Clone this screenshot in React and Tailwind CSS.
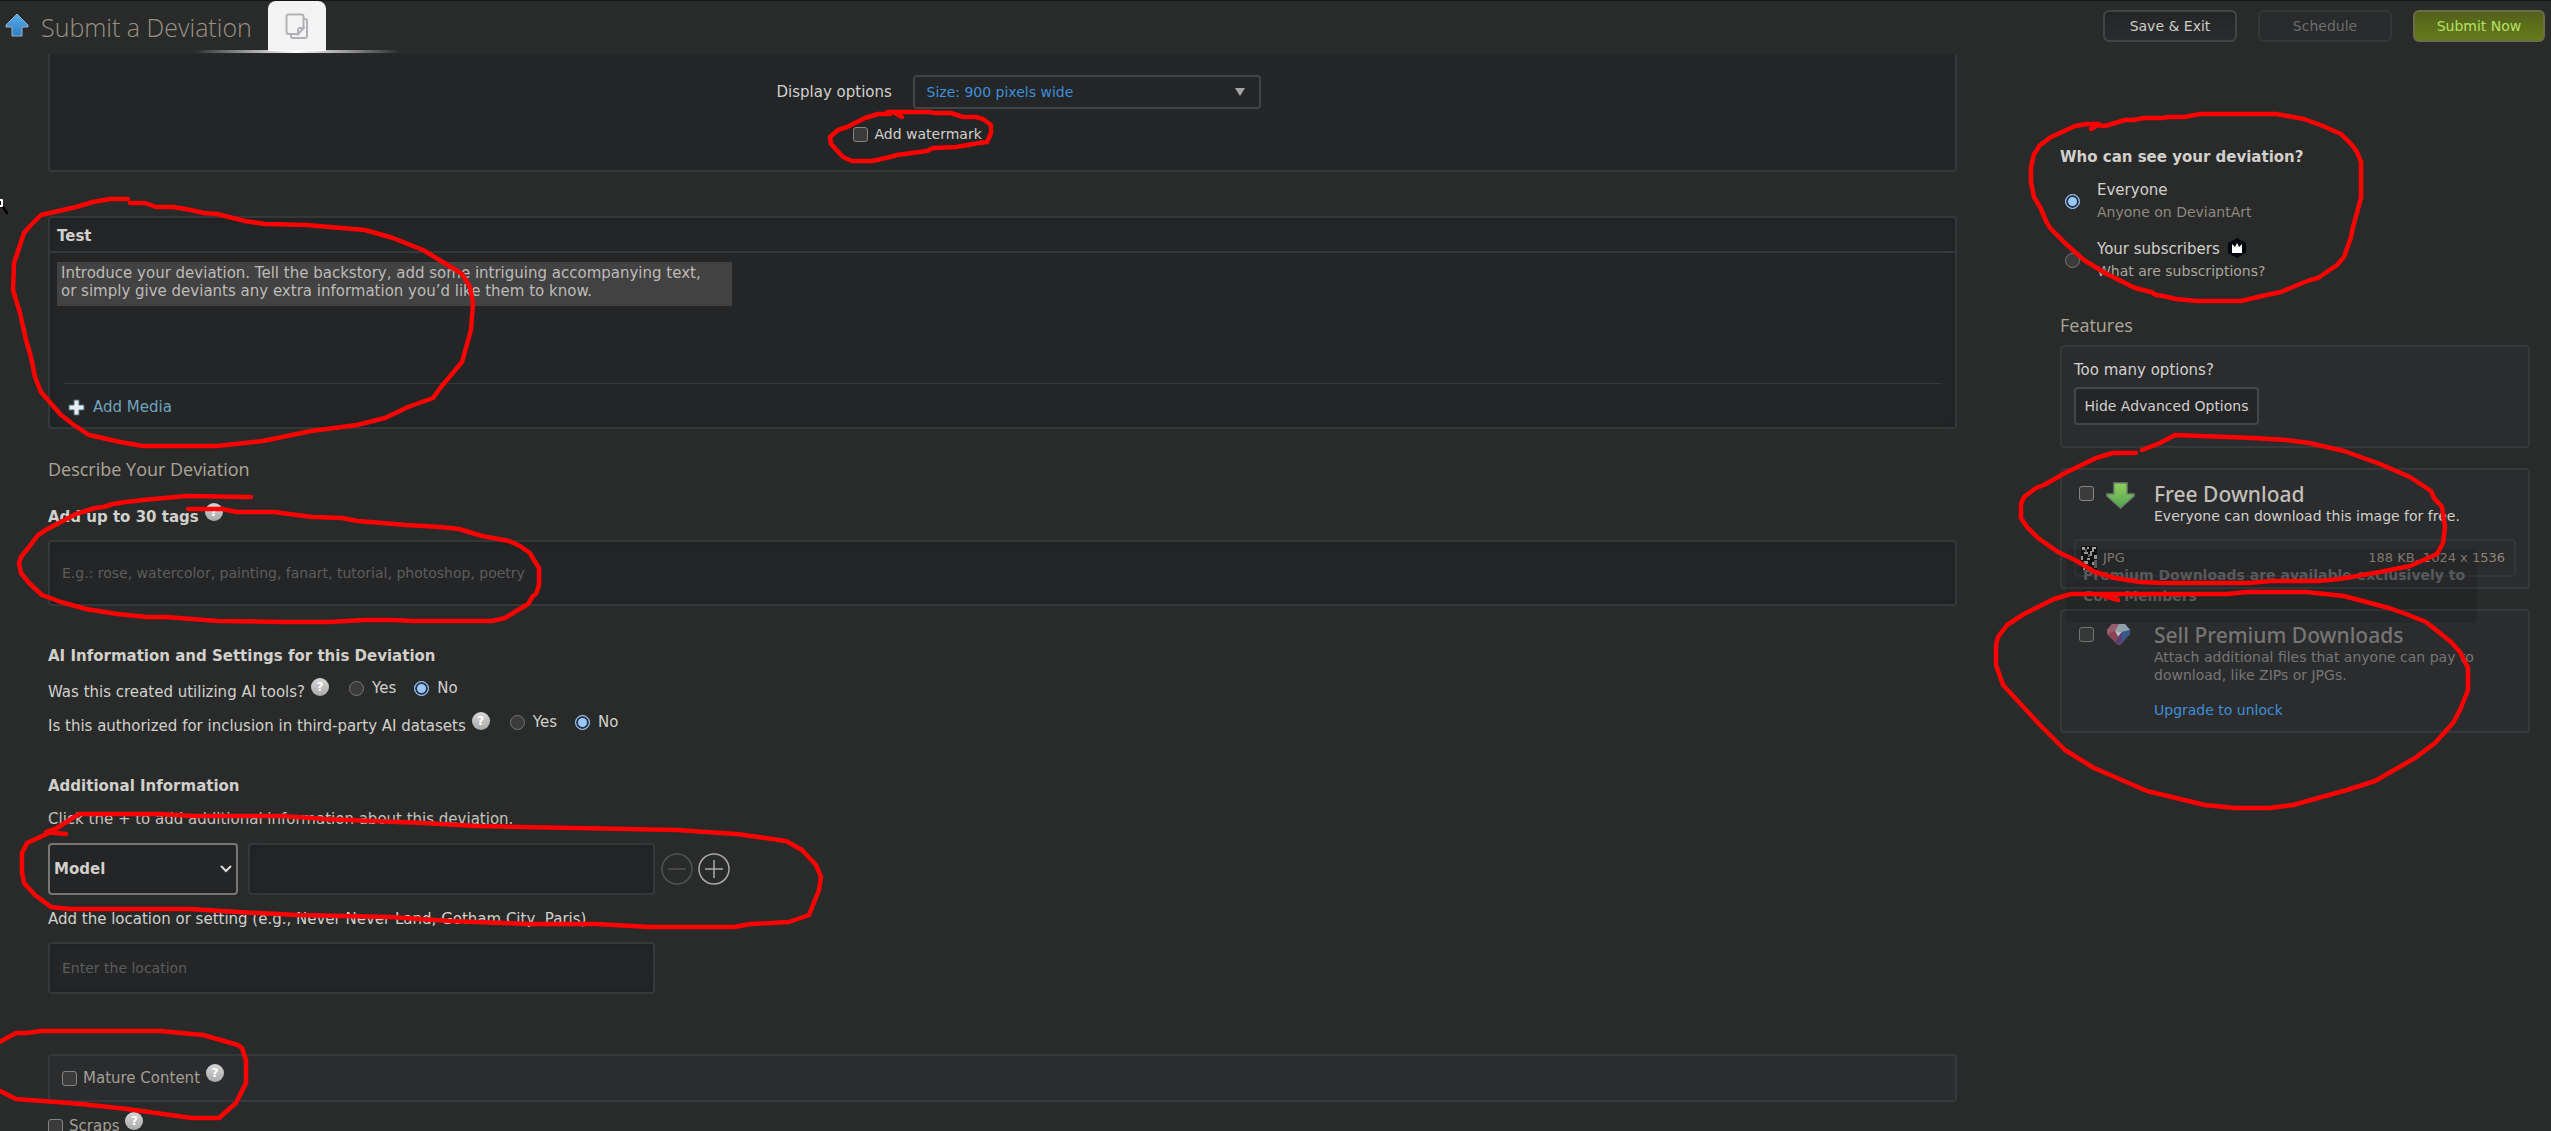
import { useState } from 'react';

const editorHint =
  'Introduce your deviation. Tell the backstory, add some intriguing accompanying text,\nor simply give deviants any extra information you’d like them to know.';

// Freehand pen strokes drawn on top of the form
const strokes = [
  '902,117 893,112 887,112 929,112 935,113 951,113 963,117 976,117 983,119 991,125 991,133 987,142 979,143 956,147 933,148 927,151 897,155 890,157 872,161 852,161 843,157 831,144 830,137 838,130 847,127 865,118 878,114 890,114',
  '2091,129 2099,124 2087,124 2075,126 2060,133 2051,137 2039,146 2037,150 2034,154 2031,168 2031,183 2034,197 2040,207 2047,223 2051,229 2066,244 2084,260 2105,273 2125,283 2135,288 2151,292 2156,295 2163,296 2176,299 2197,301 2241,301 2262,296 2281,292 2300,284 2310,280 2318,278 2337,265 2344,257 2351,237 2353,227 2361,198 2361,162 2357,152 2352,145 2341,134 2323,126 2304,119 2276,114 2200,114 2184,117 2169,117 2162,118 2144,118 2133,120 2125,120 2105,126 2096,125',
  '128,199 110,199 93,202 76,207 41,215 31,225 24,233 14,263 13,290 20,313 26,340 31,357 35,377 41,392 61,415 74,425 89,435 98,437 120,442 143,446 217,446 263,441 311,431 357,425 385,418 408,407 433,398 441,387 462,362 471,330 473,303 470,287 462,274 451,267 423,250 393,238 365,230 306,225 265,224 245,221 217,214 204,213 186,209 173,207 156,207 145,203 130,203',
  '251,497 186,496 143,500 126,502 113,504 103,507 95,508 76,514 57,524 46,530 38,535 29,547 21,557 19,563 21,573 29,583 42,595 61,602 86,609 117,614 147,617 166,617 218,621 283,622 329,622 364,620 394,620 413,621 492,621 505,618 528,604 533,596 536,594 539,585 539,568 532,557 530,553 520,546 509,541 482,536 459,529 440,527 406,525 358,521 342,518 312,517 274,512 237,512 222,509 188,509',
  '66,834 46,832 57,828 79,814 157,814 195,816 282,816 325,819 423,823 477,826 575,828 677,830 737,834 786,841 802,850 816,865 821,877 819,890 809,915 789,922 751,924 734,927 650,927 596,924 531,924 450,921 390,917 298,915 238,912 190,909 70,909 51,907 35,895 24,883 22,872 22,853 27,843 49,833',
  '-4,1044 16,1033 27,1033 41,1031 160,1031 203,1035 238,1045 242,1048 246,1060 246,1083 236,1103 219,1118 192,1118 127,1109 81,1104 43,1101 16,1099 -4,1089',
  '2136,453 2113,453 2096,458 2065,473 2044,485 2036,488 2024,497 2021,504 2021,518 2027,527 2038,538 2058,552 2075,560 2095,572 2115,578 2140,582 2162,583 2249,583 2271,581 2319,581 2339,579 2380,572 2410,566 2437,554 2443,543 2445,527 2442,507 2434,498 2431,491 2410,477 2380,464 2344,451 2309,443 2286,440 2253,438 2175,435 2160,443 2142,450',
  '2118,600 2098,594 2071,594 2054,599 2024,614 2007,625 1998,637 1996,645 1996,665 2003,685 2040,725 2065,750 2094,768 2147,791 2205,805 2235,808 2269,808 2293,805 2347,790 2375,781 2415,758 2435,743 2453,723 2460,710 2468,690 2468,668 2460,652 2451,642 2426,622 2406,614 2389,608 2344,596 2306,592 2247,592 2227,594 2098,594',
];

const fieldClass =
  'rounded-sm border-2 border-[#35383a] bg-[#242527] shadow-[inset_0_0_8px_#1f2021] outline-none placeholder:text-[#5d5d5b]';
const linkBlue = 'text-[#3f8fd6]';

const HelpButton = ({ topic }) => (
  <button
    type="button"
    aria-label={`Help: ${topic}`}
    className="-mt-1 ml-[6px] size-[18px] shrink-0 self-start rounded-full bg-gradient-to-b from-[#d6d6d6] to-[#aaaaaa] text-xs leading-[18px] font-bold text-white"
  >
    ?
  </button>
);

const Checkbox = ({ id }) => (
  <input
    id={id}
    type="checkbox"
    className="size-[15px] shrink-0 appearance-none rounded-[3px] border border-[#858585] bg-[#3b3b3b] checked:bg-[#99c8ff]"
  />
);

const Radio = ({ ...props }) => (
  <input
    type="radio"
    className="size-[15px] shrink-0 appearance-none rounded-full border border-[#757575] bg-[#3b3b3b] checked:border-[#99c8ff] checked:bg-[#99c8ff] checked:shadow-[inset_0_0_0_2px_#2c3440]"
    {...props}
  />
);

const YesNoQuestion = ({ name, text }) => {
  const [answer, setAnswer] = useState('No');
  return (
    <fieldset className="flex items-start">
      <legend className="float-left">{text}</legend>
      <HelpButton topic={text} />
      <div className="-mt-1 ml-5 flex gap-[18px]">
        {['Yes', 'No'].map((option) => (
          <label key={option} className="flex items-center gap-2">
            <Radio
              name={name}
              value={option}
              checked={answer === option}
              onChange={() => setAnswer(option)}
            />
            {option}
          </label>
        ))}
      </div>
    </fieldset>
  );
};

const UploadArrow = () => (
  <svg className="h-6 w-6" viewBox="0 0 24 24" aria-hidden="true">
    <defs>
      <linearGradient id="upload" x1="0" y1="0" x2="0" y2="1">
        <stop offset="0" stopColor="#58aeea" />
        <stop offset="1" stopColor="#2f7cc6" />
      </linearGradient>
    </defs>
    <path d="M12 1 23 12v2h-6v9H7v-9H1v-2Z" fill="url(#upload)" stroke="#9ab4c4" strokeWidth="1" />
  </svg>
);

const PagesIcon = () => (
  <svg className="h-[27px] w-6" viewBox="0 0 24 27" fill="#f4f4f5" stroke="#b3b1b7" strokeWidth="2" aria-hidden="true">
    <path d="M6 6h14q2 0 2 2v15q0 2-2 2H8q-2 0-2-2Z" />
    <path d="M3.500 1.500h13q2 0 2 2V15l-5.500 6h-9.500q-2 0-2-2V3.500q0-2 2-2Z" />
    <path d="M18.500 15h-3.500q-2 0-2 2v4Z" fill="#fff" />
  </svg>
);

const DownloadArrow = () => (
  <svg className="h-[27px] w-[29px]" viewBox="0 0 29 27" aria-hidden="true">
    <defs>
      <linearGradient id="download" x1="0" y1="0" x2="0" y2="1">
        <stop offset="0" stopColor="#8fcf5c" />
        <stop offset="1" stopColor="#55a351" />
      </linearGradient>
    </defs>
    <path d="M8 1h13v11h7v2L14.500 26 1 14v-2h7Z" fill="url(#download)" stroke="#68866a" strokeWidth="1.500" />
  </svg>
);

const Gem = () => (
  <svg className="h-[23px] w-[25px]" viewBox="0 0 25 23" aria-hidden="true">
    <path d="M6 1h13l5 6v4L14 22h-2L1 11V7Z" fill="#7a7395" />
    <path d="M6 1h7L9 8 1 11V7Z" fill="#b4687a" />
    <path d="M13 1h6l5 6-8 2-7-1Z" fill="#a9bfc9" />
    <path d="m9 8 7 1-4 5Z" fill="#e4dede" />
    <path d="m24 7v4l-8 8 0-10Z" fill="#3763a2" />
    <path d="M1 11l8-3 3 6-3 5Z" fill="#a44a5c" />
    <path d="m12 14 4-5v10l-3 3-4-3Z" fill="#69407e" />
  </svg>
);

const Thumbnail = () => (
  <svg className="h-6 w-4" viewBox="0 0 16 24" aria-hidden="true">
    <path d="M0 0h16v24H0Z" fill="#151515" />
    <path d="M1 1h3v3H1ZM6 1h2v2H6ZM11 1h4v2h-2v3h-2ZM3 6h4v2H3ZM9 5h2v5H9ZM13 9h3v4h-3ZM0 10h2v4H0ZM6 12h3v2H6ZM3 15h4v3H3ZM2 20h2v4H2ZM7 21h4v3H7ZM11 16h2v3h-2Z" fill="#a5a5a5" />
    <path d="M4 3h2v3H4ZM7 8h2v3H7ZM13 14h3v8h-3ZM0 16h2v3H0Z" fill="#626262" />
  </svg>
);

const CoreBadge = () => (
  <svg className="h-5 w-[18px]" viewBox="0 0 18 20" aria-hidden="true">
    <path d="m9 0 9 5v10l-9 5-9-5V5Z" fill="#06070d" />
    <path d="m4 6 3 3 2-4 2 4 3-3v9H4Z" fill="#fff" />
  </svg>
);

const Header = () => (
  <header className="flex h-[54px] shrink-0 items-start border-t border-[#161717]">
    <div className="mt-3 ml-[5px]">
      <UploadArrow />
    </div>
    <h1 className="mt-[7px] ml-3 w-[227px] font-['Open_Sans',sans-serif] text-[25px] leading-[38px] font-light whitespace-nowrap text-[#9a9184]">
      Submit a Deviation
    </h1>
    <div className="relative">
      <button
        type="button"
        aria-label="Files"
        className="flex h-[50px] w-[58px] items-start justify-center rounded-t-lg bg-[#f3f3f4] pt-3"
      >
        <PagesIcon />
      </button>
      <div className="absolute top-[49px] -left-[75px] h-[3px] w-[207px] bg-gradient-to-r from-transparent via-white to-transparent" />
    </div>
    <div className="mt-[9px] mr-[6px] ml-auto flex gap-[21px] text-sm">
      <button type="button" className="h-8 w-[134px] rounded-md border-2 border-[#434446] bg-gradient-to-b from-[#242527] to-[#2b2c2e] text-[#d0cdc8]">
        Save &amp; Exit
      </button>
      <button type="button" disabled className="h-8 w-[134px] rounded-md border-2 border-[#343637] bg-[#282a2b] text-[#6e6d6b]">
        Schedule
      </button>
      <button type="button" className="h-8 w-[132px] rounded-md border-2 border-[#6d6c49] bg-gradient-to-b from-[#53601a] to-[#667c1b] text-[#b4e067]">
        Submit Now
      </button>
    </div>
  </header>
);

const MainForm = () => {
  const [type, setType] = useState('Model');

  return (
    <main className="min-w-0 flex-1">
      <section className="flex h-[118px] justify-center rounded-b border-2 border-t-0 border-[#35383a] bg-[#242527] pt-[21px] pl-8">
        <div className="w-[484px]">
          <div className="flex items-center justify-between">
            <label htmlFor="display">Display options</label>
            <div className="relative">
              <select
                id="display"
                className={`block h-[34px] w-[348px] appearance-none rounded border-2 border-[#424446] bg-[#242527] pl-3 text-sm ${linkBlue}`}
              >
                <option>Size: 900 pixels wide</option>
              </select>
              <svg className="pointer-events-none absolute top-[13px] right-4 h-2 w-[10px]" viewBox="0 0 10 8" aria-hidden="true">
                <path d="M0 0h10L5 8Z" fill="#a5a5a5" />
              </svg>
            </div>
          </div>
          <label className="mt-[15px] ml-[76px] flex items-center gap-[7px] text-sm leading-5">
            <Checkbox id="watermark" />
            Add watermark
          </label>
        </div>
      </section>

      <section className="mt-11 rounded border-2 border-[#35383a] bg-[#242527] shadow-[inset_0_0_8px_#1f2021]">
        <h2 className="border-b-2 border-[#35383a] px-[7px] pt-2 pb-[5px] font-bold">Test</h2>
        <textarea
          aria-label="Description"
          defaultValue={editorHint}
          className="mt-[9px] ml-[7px] block h-[44px] w-[675px] resize-none overflow-hidden bg-[#424242] px-1 pt-[2px] leading-[18px] text-[#bdbbb8] outline-none"
        />
        <div className="mx-[14px] mt-[77px] border-t border-dotted border-[#45474a] px-1 pt-[13px] pb-[10px]">
          <button type="button" className="flex items-center gap-2 text-[#6ea3bd]">
            <svg className="size-[17px]" viewBox="0 0 17 17" aria-hidden="true">
              <path d="M6 1h5v5h5v5h-5v5H6v-5H1V6h5Z" fill="#e3edf1" stroke="#4b6a78" strokeWidth="1" />
            </svg>
            Add Media
          </button>
        </div>
      </section>

      <h2 className="mt-7 font-['Open_Sans',sans-serif] text-lg leading-6 font-medium text-[#aca59a]">
        Describe Your Deviation
      </h2>
      <div className="mt-[26px] flex font-bold">
        <label htmlFor="tags">Add up to 30 tags</label>
        <HelpButton topic="tags" />
      </div>
      <input
        id="tags"
        type="text"
        placeholder="E.g.: rose, watercolor, painting, fanart, tutorial, photoshop, poetry"
        className={`mt-[13px] block h-[66px] w-full px-3 text-sm ${fieldClass}`}
      />

      <h3 className="mt-10 font-bold">AI Information and Settings for this Deviation</h3>
      <div className="mt-4 flex flex-col gap-[14px]">
        <YesNoQuestion name="ai-tools" text="Was this created utilizing AI tools?" />
        <YesNoQuestion name="ai-datasets" text="Is this authorized for inclusion in third-party AI datasets" />
      </div>

      <h3 className="mt-10 font-bold">Additional Information</h3>
      <p className="mt-[13px] text-[#c6c3be]">Click the + to add additional information about this deviation.</p>
      <div className="mt-[14px] flex items-center">
        <div className="relative">
          <select
            aria-label="Information type"
            value={type}
            onChange={(e) => setType(e.target.value)}
            className="block h-[52px] w-[190px] appearance-none rounded border-2 border-[#767676] bg-[#242527] pl-1 font-bold"
          >
            <option>Model</option>
            <option>Photographer</option>
          </select>
          <svg className="pointer-events-none absolute top-[22px] right-[6px] h-2 w-3" viewBox="0 0 12 8" aria-hidden="true">
            <path d="m1 1 5 5 5-5" fill="none" stroke="#ddd" strokeWidth="2" />
          </svg>
        </div>
        <input type="text" aria-label={type} className={`ml-[10px] h-[52px] w-[407px] px-3 ${fieldClass}`} />
        <button type="button" disabled aria-label="Remove" className="ml-[6px] text-[#505251]">
          <svg className="size-8" viewBox="0 0 32 32" fill="none" stroke="currentColor" strokeWidth="1.500">
            <circle cx="16" cy="16" r="15" />
            <path d="M7 16h18" />
          </svg>
        </button>
        <button type="button" aria-label="Add" className="ml-[5px] text-[#a9a9a7]">
          <svg className="size-8" viewBox="0 0 32 32" fill="none" stroke="currentColor" strokeWidth="1.500">
            <circle cx="16" cy="16" r="15" />
            <path d="M7 16h18M16 7v18" />
          </svg>
        </button>
      </div>
      <label htmlFor="location" className="mt-[14px] block">
        Add the location or setting (e.g., Never Never Land, Gotham City, Paris)
      </label>
      <input
        id="location"
        type="text"
        placeholder="Enter the location"
        className={`mt-[13px] block h-[52px] w-[607px] px-3 text-sm ${fieldClass}`}
      />

      <div className="mt-[60px] flex h-12 items-center rounded border-2 border-[#36383b] bg-[#2b2c2e] px-3">
        <div className="flex items-center text-[#a39e96]">
          <Checkbox id="mature" />
          <label htmlFor="mature" className="ml-[6px]">Mature Content</label>
          <HelpButton topic="mature content" />
        </div>
      </div>
      <div className="mt-[14px] flex items-center text-[#a39e96]">
        <Checkbox id="scraps" />
        <label htmlFor="scraps" className="ml-[6px]">Scraps</label>
        <HelpButton topic="scraps" />
      </div>
    </main>
  );
};

const Sidebar = () => {
  const [audience, setAudience] = useState('everyone');
  const cardClass = 'rounded border-2 border-[#36383b] bg-[#2b2c2e]';

  return (
    <aside className="w-[470px] shrink-0 pt-[93px]">
      <h2 className="font-bold">Who can see your deviation?</h2>
      <div className="mt-3 flex items-center gap-[17px] pl-[5px]">
        <Radio id="everyone" name="audience" checked={audience === 'everyone'} onChange={() => setAudience('everyone')} />
        <label htmlFor="everyone" className="leading-[22px]">
          Everyone
          <span className="block text-sm leading-[22px] text-[#8f897f]">Anyone on DeviantArt</span>
        </label>
      </div>
      <div className="mt-[15px] flex items-center gap-[17px] pl-[5px]">
        <Radio id="subscribers" name="audience" checked={audience === 'subscribers'} onChange={() => setAudience('subscribers')} />
        <div className="leading-[22px]">
          <label htmlFor="subscribers" className="flex gap-2">
            Your subscribers <CoreBadge />
          </label>
          <a href="#subscriptions" className="block text-sm leading-[22px] text-[#aaa69f]">What are subscriptions?</a>
        </div>
      </div>

      <h2 className="mt-[31px] font-['Open_Sans',sans-serif] text-lg leading-6 font-medium text-[#aca59a]">Features</h2>
      <section className={`mt-2 h-[103px] px-3 pt-[13px] ${cardClass}`}>
        <p>Too many options?</p>
        <button type="button" className="mt-[7px] h-[38px] w-[185px] rounded-sm border-2 border-[#454648] bg-[#242527] text-sm">
          Hide Advanced Options
        </button>
      </section>

      <section className={`mt-5 h-[121px] px-3 pt-[11px] ${cardClass}`}>
        <div className="flex">
          <div className="mt-[5px] ml-[5px] flex w-[75px] gap-3">
            <Checkbox id="free" />
            <div className="-mt-1">
              <DownloadArrow />
            </div>
          </div>
          <div>
            <label htmlFor="free" className="block font-['Noto_Sans',sans-serif] text-[21px] leading-[26px] font-medium text-[#c2bfb9]">
              Free Download
            </label>
            <p className="text-sm leading-[18px]">Everyone can download this image for free.</p>
          </div>
        </div>
        <div className="mt-[14px] flex h-[38px] items-center rounded-sm border-2 border-[#333538] px-[5px] text-[13px] text-[#8f857b]">
          <Thumbnail />
          <span className="ml-[6px]">JPG</span>
          <span className="ml-auto pr-1">188 KB, 1024 x 1536</span>
        </div>
      </section>

      <section className={`relative mt-5 h-[124px] px-3 pt-[11px] ${cardClass}`}>
        <div
          role="tooltip"
          className="absolute -top-[62px] left-1 w-[411px] rounded bg-black/10 pt-4 pb-4 pl-[17px] text-sm leading-[21px] font-bold text-[#58595a]"
        >
          Premium Downloads are available exclusively to Core Members
        </div>
        <div className="flex">
          <div className="mt-[5px] ml-[5px] flex w-[75px] gap-3 opacity-80">
            <Checkbox id="premium" />
            <div className="-mt-1">
              <Gem />
            </div>
          </div>
          <div>
            <label htmlFor="premium" className="block font-['Noto_Sans',sans-serif] text-[21px] leading-[26px] font-medium text-[#777573]">
              Sell Premium Downloads
            </label>
            <p className="w-[330px] text-sm leading-[18px] text-[#787674]">
              Attach additional files that anyone can pay to download, like ZIPs or JPGs.
            </p>
            <a href="#upgrade" className={`mt-4 block text-sm leading-5 ${linkBlue}`}>Upgrade to unlock</a>
          </div>
        </div>
      </section>
    </aside>
  );
};

const PenMarks = () => (
  <svg
    className="pointer-events-none absolute inset-0 h-full w-full"
    viewBox="0 0 2551 1131"
    preserveAspectRatio="none"
    fill="none"
    strokeLinejoin="round"
    strokeLinecap="round"
    aria-hidden="true"
  >
    {strokes.map((points) => (
      <polyline key={points} points={points} stroke="#ff0000" strokeWidth="4.500" />
    ))}
    <path d="m2 206 5 7" stroke="#000" strokeWidth="2.500" />
    <path d="M-2 200h4v6h-4Z" fill="#000" stroke="#fff" strokeWidth="2" />
  </svg>
);

const App = () => (
  <div className="relative flex h-screen flex-col overflow-hidden bg-[#292b2a] font-['DejaVu_Sans',Verdana,sans-serif] text-[15px] leading-5 text-[#d2d0cc]">
    <Header />
    <div className="flex min-h-0 flex-1 gap-[103px] pr-[21px] pl-12">
      <MainForm />
      <Sidebar />
    </div>
    <PenMarks />
  </div>
);

export default App;
